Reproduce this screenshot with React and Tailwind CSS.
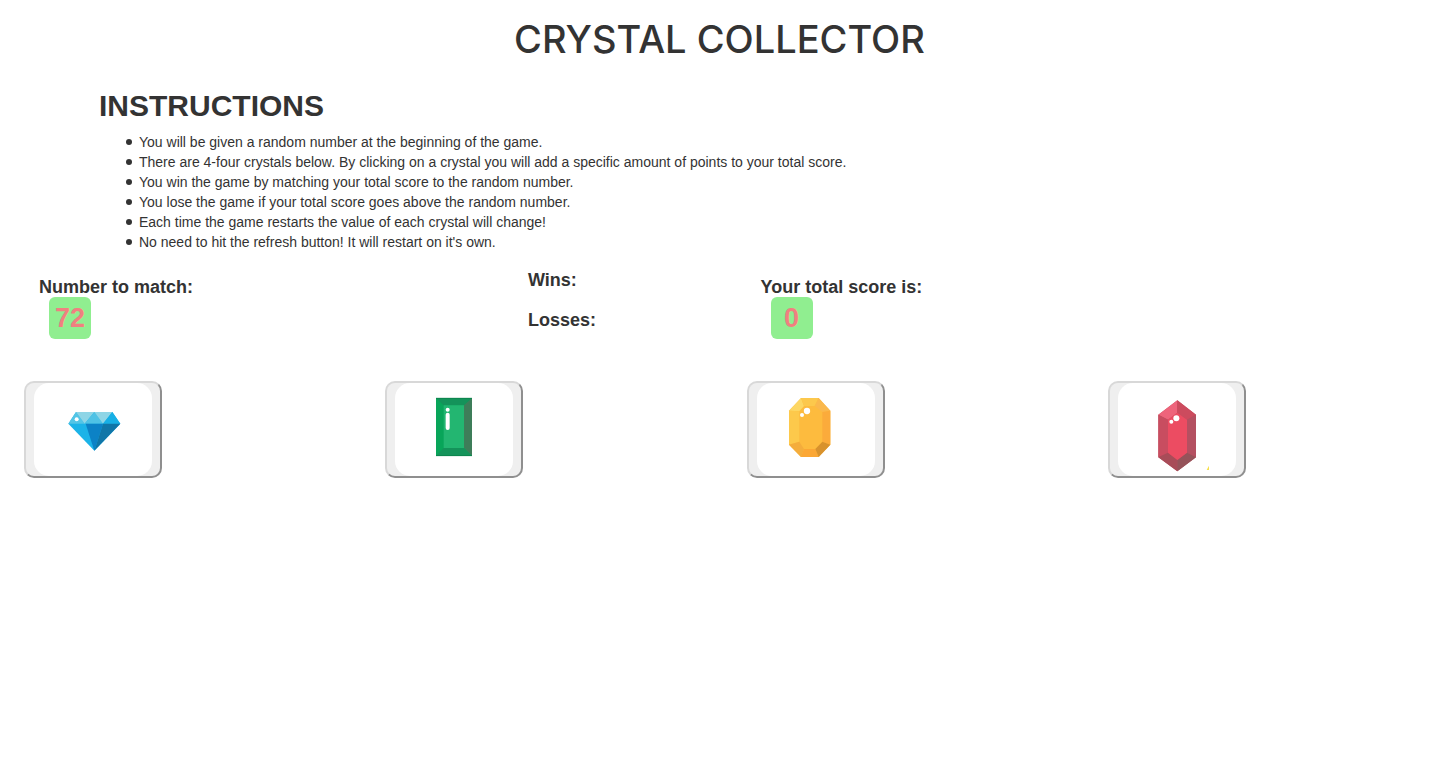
import { useState } from "react";

const instructions = [
  "You will be given a random number at the beginning of the game.",
  "There are 4-four crystals below. By clicking on a crystal you will add a specific amount of points to your total score.",
  "You win the game by matching your total score to the random number.",
  "You lose the game if your total score goes above the random number.",
  "Each time the game restarts the value of each crystal will change!",
  "No need to hit the refresh button! It will restart on it's own.",
];

function Diamond() {
  return (
    <svg viewBox="42 39 354 279" className="block h-full w-full" aria-hidden="true">
      <path d="M168 126H277L301 161L223 242L145 161Z" fill="#1bb3e8" />
      <path d="M145 161L168 126L194 161Z" fill="#53c5e6" />
      <path d="M168 126H223L194 161Z" fill="#8ed5e6" />
      <path d="M194 161L223 126L249 161Z" fill="#4fc2e5" />
      <path d="M223 126H277L249 161Z" fill="#8ed5e6" />
      <path d="M249 161L277 126L301 161Z" fill="#17afe5" />
      <path d="M197 161H249L223 242Z" fill="#0c82c6" />
      <path d="M249 161H301L223 242Z" fill="#1076a8" />
      <circle cx="170" cy="148" r="6" fill="#fff" />
    </svg>
  );
}

function Emerald() {
  return (
    <svg viewBox="45 39 354 279" className="block h-full w-full" aria-hidden="true">
      <path d="M168 84H276V258H168Z" fill="#08a559" />
      <path d="M168 84H276L252 106H191Z" fill="#14935a" />
      <path d="M276 84V258L252 234V106Z" fill="#3e7d59" />
      <path d="M168 258L191 234H252L276 258Z" fill="#14935a" />
      <path d="M191 106H252V234H191Z" fill="#23b671" />
      <path d="M168 84.75H276M168 257H276" stroke="#087c46" strokeWidth="2" />
      <circle cx="203" cy="119" r="6" fill="#fff" />
      <rect x="197" y="128" width="12" height="52" rx="6" fill="#fff" />
    </svg>
  );
}

function Topaz() {
  return (
    <svg viewBox="51 39 354 279" className="block h-full w-full" aria-hidden="true">
      <path d="M183 84H236L271 122V224L236 261H183L147 224V122Z" fill="#fdbb3e" />
      <path d="M147 122L183 84L192 108L178 124Z" fill="#fdd763" />
      <path d="M183 84H236L224 108H192Z" fill="#fcc84c" />
      <path d="M236 84L271 122L247 126L224 108Z" fill="#fab84d" />
      <path d="M147 122L178 124V215L147 224Z" fill="#fdc94b" />
      <path d="M271 122L247 126V215L271 224Z" fill="#fbab3b" />
      <path d="M147 224L178 215L192 237L183 261Z" fill="#f4ad3c" />
      <path d="M183 261L192 237H226L236 261Z" fill="#fba735" />
      <path d="M236 261L226 237L247 215L271 224Z" fill="#d8922d" />
      <circle cx="201" cy="123" r="9.5" fill="#fff" />
      <circle cx="186" cy="135" r="6" fill="#fff" />
    </svg>
  );
}

function Ruby() {
  return (
    <svg viewBox="54 39 354 279" className="block h-full w-full" aria-hidden="true">
      <path d="M232 91L288 134V262L232 304L175 262V134Z" fill="#bd4c5d" />
      <path d="M175 134L232 91V128L204 149Z" fill="#ee647b" />
      <path d="M232 91L288 134L261 149L232 128Z" fill="#cc4b5e" />
      <path d="M175 134L204 149V248L175 262Z" fill="#c84d60" />
      <path d="M288 134L261 149V248L288 262Z" fill="#b45061" />
      <path d="M175 262L204 248L232 270V304Z" fill="#a84c58" />
      <path d="M288 262L261 248L232 270V304Z" fill="#95535a" />
      <path d="M232 128L261 149V248L232 270L204 248V149Z" fill="#ec4c62" />
      <circle cx="229" cy="145" r="9" fill="#fff" />
      <circle cx="214" cy="155" r="6" fill="#fff" />
      <path d="M320 300L327 287V300Z" fill="#f7e04b" />
    </svg>
  );
}

const crystals = [
  { name: "Diamond", value: 7, Art: Diamond },
  { name: "Emerald", value: 3, Art: Emerald },
  { name: "Topaz", value: 5, Art: Topaz },
  { name: "Ruby", value: 11, Art: Ruby },
];

function NumberBadge({ children }) {
  return (
    <output className="ml-2.5 flex h-[42px] w-[42px] items-center justify-center rounded-md bg-[#90ee90] text-[27px] font-bold text-[#f08080]">
      {children}
    </output>
  );
}

export default function App() {
  const [score, setScore] = useState(0);

  return (
    <main className="min-h-screen overflow-x-hidden bg-white pt-[19px] font-['Liberation_Sans',Arial,sans-serif] text-sm leading-5 text-[#333]">
      <h1 className="text-center font-[Inter,sans-serif] text-[38px] leading-10 font-medium">
        CRYSTAL COLLECTOR
      </h1>

      <section className="mt-[30px] pl-[99px]">
        <h2 className="text-3xl leading-[33px] font-bold">INSTRUCTIONS</h2>
        <ul className="mt-2.5 pl-[27px]">
          {instructions.map((line) => (
            <li
              key={line}
              className="flex items-center gap-[7px] before:size-1.5 before:shrink-0 before:rounded-full before:bg-[#333]"
            >
              {line}
            </li>
          ))}
        </ul>
      </section>

      <section className="mt-[18px] -mr-[43px] grid grid-cols-12 pl-[39px] text-lg leading-5 font-bold">
        <div className="col-span-4 pt-2">
          <h3 className="leading-[19px]">Number to match:</h3>
          <NumberBadge>72</NumberBadge>
        </div>
        <div className="col-span-2 flex flex-col gap-5 pl-2">
          <h3>Wins:</h3>
          <h3>Losses:</h3>
        </div>
        <div className="col-span-6 pt-2">
          <h3 className="leading-[19px]">Your total score is:</h3>
          <NumberBadge>{score}</NumberBadge>
        </div>
      </section>

      <section className="mt-[42px] -mr-[30px] grid grid-cols-4 pl-6">
        {crystals.map(({ name, value, Art }) => (
          <div key={name}>
            <button
              type="button"
              aria-label={name}
              onClick={() => setScore(score + value)}
              className="block rounded-[10px] border-2 border-t-[#d8d8d8] border-r-[#8f8f8f] border-b-[#8f8f8f] border-l-[#d8d8d8] bg-[#efefef] px-2"
            >
              <span className="block h-[93px] w-[118px] overflow-hidden rounded-[15px] bg-white">
                <Art />
              </span>
            </button>
          </div>
        ))}
      </section>
    </main>
  );
}
